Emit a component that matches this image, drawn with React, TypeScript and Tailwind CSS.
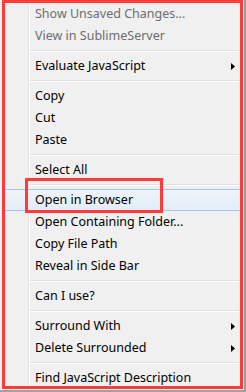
import React from 'react';

type Item =
  | { kind: 'sep' }
  | { kind: 'item'; label: string; disabled?: boolean; sub?: boolean; hover?: boolean };

const items: Item[] = [
  { kind: 'item', label: 'Show Unsaved Changes...', disabled: true },
  { kind: 'item', label: 'View in SublimeServer', disabled: true },
  { kind: 'sep' },
  { kind: 'item', label: 'Evaluate JavaScript', sub: true },
  { kind: 'sep' },
  { kind: 'item', label: 'Copy' },
  { kind: 'item', label: 'Cut' },
  { kind: 'item', label: 'Paste' },
  { kind: 'sep' },
  { kind: 'item', label: 'Select All' },
  { kind: 'sep' },
  { kind: 'item', label: 'Open in Browser', hover: true },
  { kind: 'item', label: 'Open Containing Folder...' },
  { kind: 'item', label: 'Copy File Path' },
  { kind: 'item', label: 'Reveal in Side Bar' },
  { kind: 'sep' },
  { kind: 'item', label: 'Can I use?' },
  { kind: 'sep' },
  { kind: 'item', label: 'Surround With', sub: true },
  { kind: 'item', label: 'Delete Surrounded', sub: true },
  { kind: 'sep' },
  { kind: 'item', label: 'Find JavaScript Description' },
];

function Arrow() {
  return (
    <svg width="4" height="7" viewBox="0 0 4 7" className="mr-[9px]">
      <path d="M0 0 L4 3.5 L0 7 Z" fill="#000" />
    </svg>
  );
}

export default function App() {
  return (
    <div
      className="relative w-[246px] h-[392px] bg-[#f0f0f0] border-r-2 border-b-2 border-[#a0a0a0] overflow-hidden"
      style={{ fontFamily: '"Noto Sans", "Noto Sans CJK SC", sans-serif' }}
    >
      {/* gutter line */}
      <div className="absolute left-[28px] top-0 bottom-0 w-[2px] border-l border-[#e2e3e3] bg-white" />

      <div className="relative flex flex-col pt-[3px]">
        {items.map((it, i) =>
          it.kind === 'sep' ? (
            <div key={i} className="h-[8px] flex flex-col justify-center pl-[30px] pr-[4px]">
              <div className="h-px bg-[#e0e0e0]" />
              <div className="h-px bg-white" />
            </div>
          ) : (
            <div
              key={i}
              className={`h-[22px] flex items-center justify-between text-[12.5px] ${
                it.disabled ? 'text-[#6d6d6d]' : 'text-black'
              } ${
                it.hover
                  ? 'bg-gradient-to-b from-[#eef4fb] to-[#e3ecf8] border border-[#a8c7ec] rounded-[2px] mx-[2px] pl-[32px]'
                  : 'pl-[35px]'
              }`}
            >
              <span>{it.label}</span>
              {it.sub && <Arrow />}
            </div>
          )
        )}
      </div>

      {/* annotation frames */}
      <div className="absolute left-[2px] top-0 w-[241px] h-[389px] border-[3px] border-[#ff3b3b] pointer-events-none" />
      <div className="absolute left-[25px] top-[178px] w-[138px] h-[35px] border-[3px] border-[#ff3b3b] pointer-events-none" />
    </div>
  );
}
